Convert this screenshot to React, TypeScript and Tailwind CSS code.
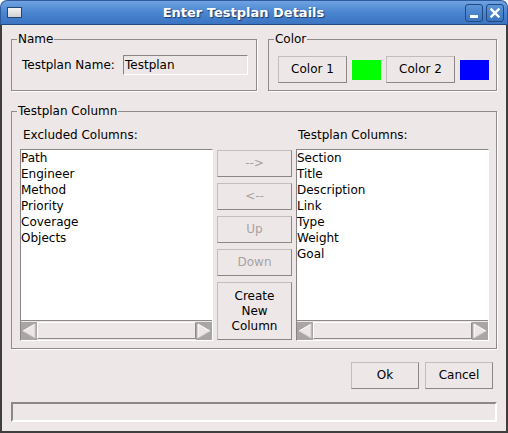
import React from "react";

const excluded = ["Path", "Engineer", "Method", "Priority", "Coverage", "Objects"];
const included = ["Section", "Title", "Description", "Link", "Type", "Weight", "Goal"];

function Btn({ children, disabled, className = "" }: { children: React.ReactNode; disabled?: boolean; className?: string }) {
    return (
        <div
            className={
                "flex items-center justify-center border border-t-[#c4bdbd] border-l-[#c4bdbd] border-r-[#8c8686] border-b-[#8c8686] bg-[#eee7e7] text-center leading-[15px] " +
                (disabled ? "text-[#a8a2a2] " : "text-black ") +
                className
            }
        >
            {children}
        </div>
    );
}

function Arrow({ dir }: { dir: "left" | "right" }) {
    return (
        <svg width="16" height="18" viewBox="0 0 16 18" className="shrink-0">
            <rect x="0" y="0" width="16" height="18" fill="#aaa5a5" />
            {dir === "left" ? (
                <>
                    <polygon points="2,9 14,2 14,16" fill="#ece6e6" />
                    <polyline points="14,2 2,9" fill="none" stroke="#ffffff" strokeWidth="1" />
                    <polyline points="2,9 14,16 14,2" fill="none" stroke="#d2cccc" strokeWidth="1" />
                </>
            ) : (
                <>
                    <polygon points="14,9 2,2 2,16" fill="#ece6e6" />
                    <polyline points="2,16 2,2 14,9" fill="none" stroke="#ffffff" strokeWidth="1" />
                    <polyline points="14,9 2,16" fill="none" stroke="#d2cccc" strokeWidth="1" />
                </>
            )}
        </svg>
    );
}

function ListBox({ items }: { items: string[] }) {
    return (
        <div className="flex h-[192px] w-[193px] flex-col border border-t-[#8a8585] border-l-[#8a8585] border-r-white border-b-white bg-white">
            <div className="flex-1 leading-[16px]">
                {items.map((it) => (
                    <div key={it}>{it}</div>
                ))}
            </div>
            <div className="flex h-[20px] border-t border-[#8f8a8a] bg-[#eee7e7] py-[1px]">
                <Arrow dir="left" />
                <div className="flex-1 border border-t-white border-l-white border-r-[#8f8a8a] border-b-[#8f8a8a] bg-[#eee7e7]" />
                <Arrow dir="right" />
            </div>
        </div>
    );
}

export default function App() {
    return (
        <div className="flex h-[433px] w-[508px] flex-col font-['DejaVu_Sans',sans-serif] text-[12px] text-black">
            {/* title bar */}
            <div className="flex h-[25px] shrink-0 items-center rounded-t-[7px] border border-b-[#24497e] border-[#2f5c9c] bg-gradient-to-b from-[#6fa2e2] via-[#4a86d0] to-[#3b74c2] pl-[6px] pr-[3px]">
                <div className="h-[11px] w-[15px] border border-[#23466f] bg-gradient-to-b from-[#f4f4f4] to-[#d2d2d2]" />
                <div className="flex-1 text-center text-[13px] font-bold text-white [text-shadow:1px_1px_1px_#1b3b6b]">
                    Enter Testplan Details
                </div>
                <div className="flex gap-[3px]">
                    <div className="flex h-[18px] w-[18px] items-end justify-center rounded-[3px] border border-[#22497f] bg-gradient-to-b from-[#5d95da] to-[#3a73c0] pb-[3px]">
                        <div className="h-[3px] w-[8px] bg-white" />
                    </div>
                    <div className="flex h-[18px] w-[18px] items-center justify-center rounded-[3px] border border-[#22497f] bg-gradient-to-b from-[#5d95da] to-[#3a73c0]">
                        <svg width="10" height="10" viewBox="0 0 10 10">
                            <path d="M1.5 1.5 L8.5 8.5 M8.5 1.5 L1.5 8.5" stroke="#fff" strokeWidth="2.4" strokeLinecap="square" />
                        </svg>
                    </div>
                </div>
            </div>

            {/* body */}
            <div className="flex flex-1 flex-col border-x-2 border-b-2 border-x-[#3e3e3e] border-b-[#3e3e3e] bg-[#eee7e7] px-[9px] pt-[7px]">
                <div className="flex gap-[11px]">
                    <fieldset className="w-[247px] border border-[#8f8b8b] pl-[9px] pb-[15px] pt-[9px] shadow-[1px_1px_0_#ffffff]">
                        <legend className="ml-[-4px] px-[1px] leading-[14px]">Name</legend>
                        <div className="flex items-center">
                            <span className="ml-[1px] w-[101px]">Testplan Name:</span>
                            <div className="flex h-[20px] w-[125px] items-center border border-t-[#8a8585] border-l-[#8a8585] border-r-white border-b-white pl-[1px]">
                                Testplan
                            </div>
                        </div>
                    </fieldset>
                    <fieldset className="w-[230px] border border-[#8f8b8b] pl-[9px] pb-[7px] pt-[10px] shadow-[1px_1px_0_#ffffff]">
                        <legend className="ml-[-4px] px-[1px] leading-[14px]">Color</legend>
                        <div className="flex items-center gap-[5px]">
                            <Btn className="h-[27px] w-[69px]">Color 1</Btn>
                            <div className="h-[20px] w-[29px] bg-[#00ff00]" />
                            <Btn className="h-[27px] w-[69px]">Color 2</Btn>
                            <div className="h-[20px] w-[29px] bg-[#0000ff]" />
                        </div>
                    </fieldset>
                </div>

                <fieldset className="mt-[13px] border border-[#8f8b8b] pl-[8px] pb-[7px] pt-[10px] shadow-[1px_1px_0_#ffffff]">
                    <legend className="ml-[-3px] px-[1px] leading-[14px]">Testplan Column</legend>
                    <div className="flex gap-[4px]">
                        <div className="flex flex-col">
                            <div className="mb-[7px] ml-[3px] leading-[14px]">Excluded Columns:</div>
                            <ListBox items={excluded} />
                        </div>
                        <div className="mt-[22px] flex w-[75px] flex-col gap-[6px]">
                            <Btn disabled className="h-[27px]">--&gt;</Btn>
                            <Btn disabled className="h-[27px]">&lt;--</Btn>
                            <Btn disabled className="h-[27px]">Up</Btn>
                            <Btn disabled className="h-[27px]">Down</Btn>
                            <Btn className="h-[58px]">
                                Create
                                <br />
                                New
                                <br />
                                Column
                            </Btn>
                        </div>
                        <div className="flex flex-col">
                            <div className="mb-[7px] ml-[2px] leading-[14px]">Testplan Columns:</div>
                            <ListBox items={included} />
                        </div>
                    </div>
                </fieldset>

                <div className="mr-[4px] mt-[13px] flex justify-end gap-[6px]">
                    <Btn className="h-[27px] w-[68px]">Ok</Btn>
                    <Btn className="h-[27px] w-[68px]">Cancel</Btn>
                </div>

                <div className="mt-[13px] h-[20px] border-2 border-t-[#8c8888] border-l-[#8c8888] border-r-white border-b-white" />
            </div>
        </div>
    );
}
